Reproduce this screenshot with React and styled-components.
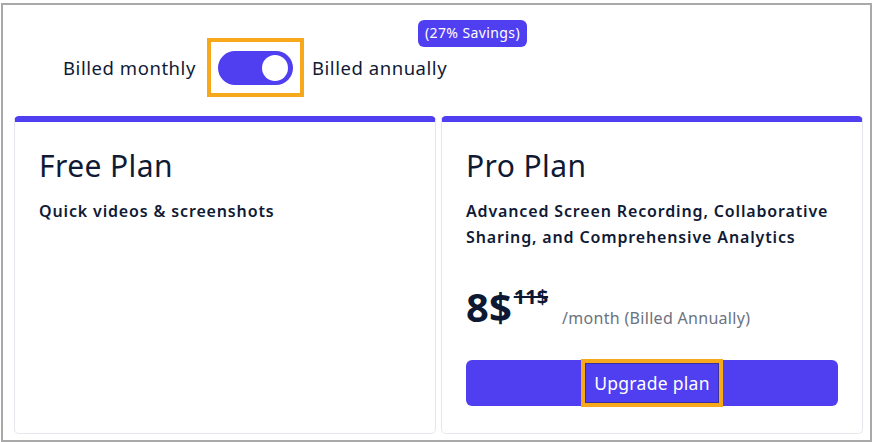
import styled, { createGlobalStyle } from 'styled-components';

const GlobalStyle = createGlobalStyle`
  html, body {
    margin: 0;
    padding: 0;
    background: #ffffff;
  }
  body {
    font-family: "Noto Sans", "Open Sans", sans-serif;
    color: #101a35;
  }
`;

const Frame = styled.div`
  box-sizing: border-box;
  width: 871px;
  height: 439px;
  margin: 3px 0 0 1px;
  border: 2px solid #a9a9a9;
  padding: 0 4px 0 11px;
  display: flex;
  flex-direction: column;
  overflow: hidden;
`;

const ToggleRow = styled.div`
  display: flex;
  align-items: center;
  margin-top: 33px;
  padding-left: 49px;
  height: 59px;
`;

const Label = styled.span`
  position: relative;
  font-size: 18.5px;
  letter-spacing: 0.55px;
  line-height: 24px;
  color: #101a35;
  white-space: nowrap;
`;

const FocusBox = styled.div`
  box-sizing: border-box;
  width: 97px;
  height: 59px;
  border: 4px solid #f8a81b;
  margin: 0 8px 0 11px;
  display: flex;
  align-items: center;
  justify-content: center;
`;

const Switch = styled.div`
  box-sizing: border-box;
  width: 75px;
  height: 34px;
  border-radius: 17px;
  background: #4f3ff0;
  display: flex;
  align-items: center;
  justify-content: ${({ $on }) => ($on ? 'flex-end' : 'flex-start')};
  padding: 0 5px;
`;

const Knob = styled.div`
  width: 26px;
  height: 26px;
  border-radius: 50%;
  background: #ffffff;
`;

const Badge = styled.span`
  position: absolute;
  left: 106px;
  top: -36px;
  height: 27px;
  display: flex;
  align-items: center;
  white-space: nowrap;
  background: #4f3ff0;
  color: #ffffff;
  font-size: 14px;
  letter-spacing: 0.4px;
  padding: 0 7px;
  border-radius: 6px;
`;

const Cards = styled.div`
  display: flex;
  gap: 5px;
  margin-top: 19px;
  flex: 1;
  padding-bottom: 6px;
`;

const Card = styled.div`
  box-sizing: border-box;
  width: 422px;
  border: 1px solid #e6e7ec;
  border-top: 6px solid #4f3ff0;
  border-radius: 5px;
  padding: 26px 24px 0 24px;
  display: flex;
  flex-direction: column;
`;

const Title = styled.h2`
  margin: 0;
  font-size: 30px;
  letter-spacing: 0.4px;
  line-height: 36px;
  font-weight: 400;
  color: #101a35;
`;

const Description = styled.p`
  margin: 14px 0 0;
  font-size: 16px;
  letter-spacing: 0.85px;
  line-height: 26px;
  font-weight: 600;
  color: #101a35;
`;

const PriceRow = styled.div`
  display: flex;
  align-items: baseline;
  margin-top: 37px;
`;

const Price = styled.span`
  font-size: 40px;
  line-height: 40px;
  font-weight: 700;
  color: #0d1833;
`;

const OldPrice = styled.s`
  align-self: flex-start;
  font-size: 20px;
  line-height: 20px;
  font-weight: 700;
  margin: 0 14px 0 2px;
  color: #0d1833;
`;

const Period = styled.span`
  font-size: 16px;
  letter-spacing: 0.3px;
  color: #6b7280;
  position: relative;
  top: 2px;
`;

const UpgradeButton = styled.button`
  margin-top: 33px;
  height: 46px;
  width: 100%;
  border: none;
  border-radius: 6px;
  background: #4f3ff0;
  display: flex;
  align-items: center;
  justify-content: center;
  font-family: inherit;
  cursor: pointer;
  padding: 0;
`;

const ButtonText = styled.span`
  box-sizing: border-box;
  height: 48px;
  display: flex;
  align-items: center;
  padding: 0 9px;
  border: 4px solid #f8a81b;
  box-shadow: inset 0 0 0 1px #3a2f9c;
  color: #ffffff;
  font-size: 17.5px;
  letter-spacing: 0.3px;
`;

function App() {
  return (
    <>
      <GlobalStyle />
      <Frame>
        <ToggleRow>
          <Label>Billed monthly</Label>
          <FocusBox>
            <Switch $on>
              <Knob />
            </Switch>
          </FocusBox>
          <Label>
            Billed annually
            <Badge>(27% Savings)</Badge>
          </Label>
        </ToggleRow>
        <Cards>
          <Card>
            <Title>Free Plan</Title>
            <Description>Quick videos &amp; screenshots</Description>
          </Card>
          <Card>
            <Title>Pro Plan</Title>
            <Description>
              Advanced Screen Recording, Collaborative Sharing, and Comprehensive Analytics
            </Description>
            <PriceRow>
              <Price>8$</Price>
              <OldPrice>11$</OldPrice>
              <Period>/month (Billed Annually)</Period>
            </PriceRow>
            <UpgradeButton>
              <ButtonText>Upgrade plan</ButtonText>
            </UpgradeButton>
          </Card>
        </Cards>
      </Frame>
    </>
  );
}

export default App;
